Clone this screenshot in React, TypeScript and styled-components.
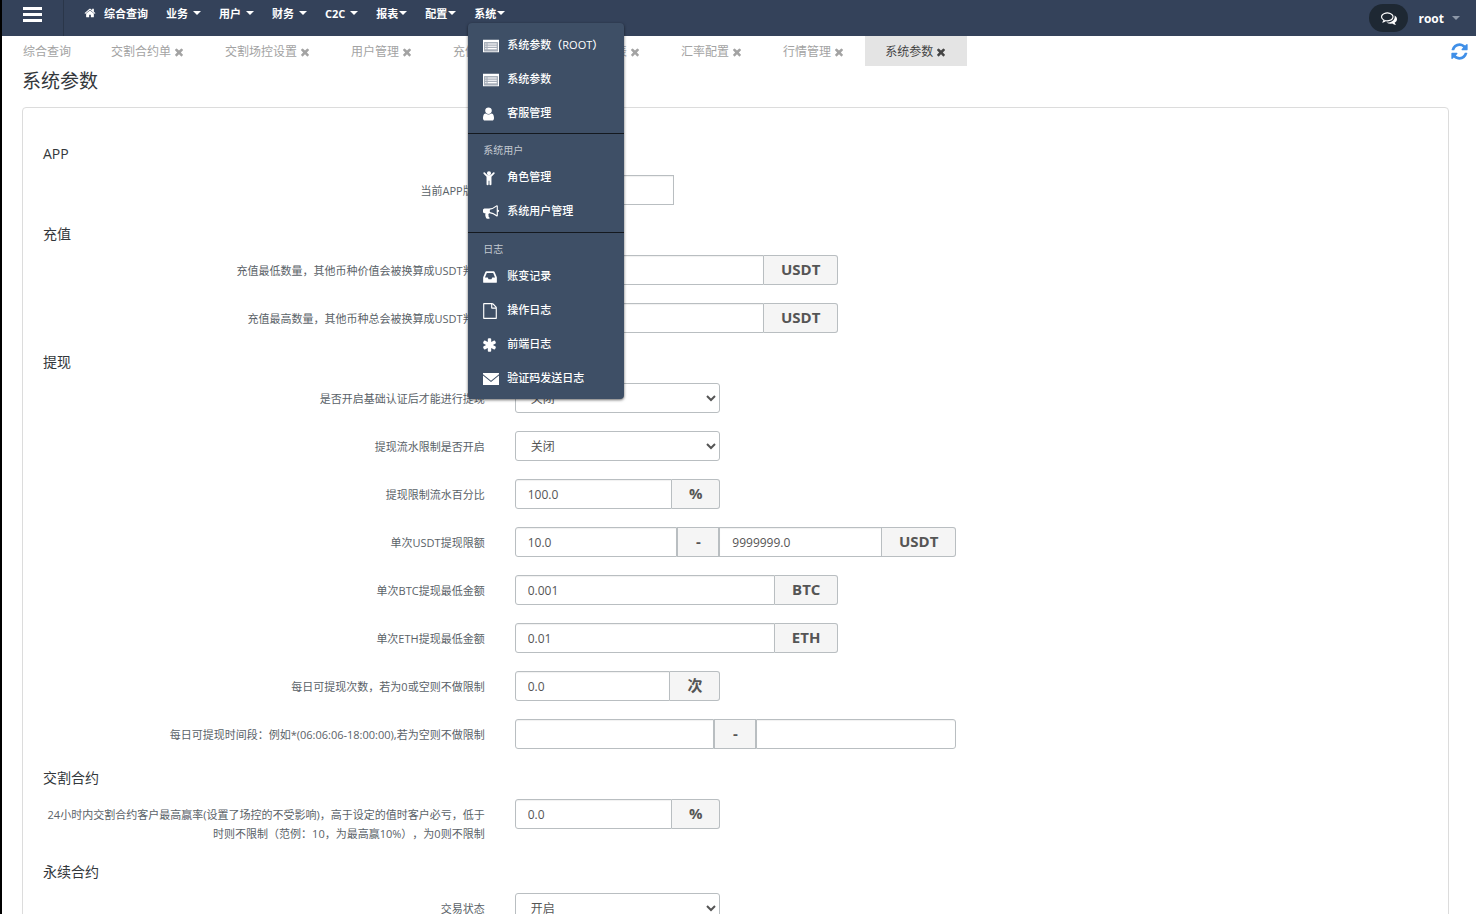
import React, { useId } from "react";
import styled, { createGlobalStyle, css } from "styled-components";

const GlobalStyle = createGlobalStyle`
  *, *::before, *::after { box-sizing: border-box; }
  body {
    margin: 0;
    background: #fff;
    color: #5a5f63;
    font-family: "Open Sans", "Noto Sans CJK SC", sans-serif;
    font-size: 11px;
    text-spacing-trim: space-all;
  }
  button, input, select { font-family: inherit; }
  ul { list-style: none; margin: 0; padding: 0; }
  a { color: inherit; text-decoration: none; }
`;

/* ---------- icons ---------- */

const ICONS = {
  home: "M1472 992v480q0 26-19 45t-45 19h-384v-384h-256v384h-384q-26 0-45-19t-19-45v-480q0-1 .5-3t.5-3l575-474 575 474q1 2 1 6zm223-69l-62 74q-8 9-21 11h-3q-13 0-21-7l-692-577-692 577q-12 8-24 7-13-2-21-11l-62-74q-8-10-7-23.5t11-21.5l719-599q32-26 76-26t76 26l244 204v-195q0-14 9-23t23-9h192q14 0 23 9t9 23v408l219 182q10 8 11 21.5t-7 23.5z",
  times:
    "M1490 1322q0 40-28 68l-136 136q-28 28-68 28t-68-28l-294-294-294 294q-28 28-68 28t-68-28l-136-136q-28-28-28-68t28-68l294-294-294-294q-28-28-28-68t28-68l136-136q28-28 68-28t68 28l294 294 294-294q28-28 68-28t68 28l136 136q28 28 28 68t-28 68l-294 294 294 294q28 28 28 68z",
  refresh:
    "M1639 1056q0 5-1 7-64 268-268 434.5t-478 166.5q-146 0-282.5-55t-243.5-157l-129 129q-19 19-45 19t-45-19-19-45v-448q0-26 19-45t45-19h448q26 0 45 19t19 45-19 45l-137 137q71 66 161 102t187 36q134 0 250-65t186-179q11-17 53-117 8-23 30-23h192q13 0 22.5 9.5t9.5 22.5zm25-800v448q0 26-19 45t-45 19h-448q-26 0-45-19t-19-45 19-45l138-138q-148-137-349-137-134 0-250 65t-186 179q-11 17-53 117-8 23-30 23h-199q-13 0-22.5-9.5t-9.5-22.5v-7q65-268 270-434.5t480-166.5q146 0 284 55.5t245 156.5l130-129q19-19 45-19t45 19 19 45z",
  comments:
    "M704 384q-153 0-286 52t-211.5 141-78.5 191q0 82 53 158t149 132l97 56-35 84q34-20 62-39l44-31 53 10q78 14 153 14 153 0 286-52t211.5-141 78.5-191-78.5-191-211.5-141-286-52zm0-128q191 0 353.5 68.5t256.5 186.5 94 257-94 257-256.5 186.5-353.5 68.5q-86 0-176-16-124 88-278 128-36 9-86 16h-3q-11 0-20.5-8t-11.5-21q-1-3-1-6.5t.5-6.5 2-6l2.5-5 3.5-5.5 4-5 4.5-5 4-4.5q5-6 23-25t26-29.5 22.5-29 25-38.5 20.5-44q-124-72-195-177t-71-224q0-139 94-257t256.5-186.5 353.5-68.5zm822 1169q10 24 20.5 44t25 38.5 22.5 29 26 29.5 23 25q1 1 4 4.5t4.5 5 4 5 3.5 5.5l2.5 5 2 6 .5 6.5-1 6.5q-3 14-13 22t-22 7q-50-7-86-16-154-40-278-128-90 16-176 16-271 0-472-132 58 4 88 4 161 0 309-45t264-129q125-92 192-212t67-254q0-77-23-152 129 71 204 178t75 230q0 120-71 224.5t-195 176.5z",
  user: "M1536 1399q0 109-62.5 187t-150.5 78h-854q-88 0-150.5-78t-62.5-187q0-85 8.5-160.5t31.5-152 58.5-131 94-89 134.5-34.5q131 128 313 128t313-128q76 0 134.5 34.5t94 89 58.5 131 31.5 152 8.5 160.5zm-256-887q0 159-112.5 271.5t-271.5 112.5-271.5-112.5-112.5-271.5 112.5-271.5 271.5-112.5 271.5 112.5 112.5 271.5z",
  bullhorn:
    "M1664 640q53 0 90.5 37.5t37.5 90.5-37.5 90.5-90.5 37.5v384q0 52-38 90t-90 38q-417-347-812-380-58 19-91 66t-31 100.5 40 92.5q-20 33-23 65.5t6 58 33.5 55 48 50 61.5 50.5q-29 58-111.5 83t-168.5 11.5-132-55.5q-7-23-29.5-87.5t-32-94.5-23-89-15-101 3.5-98.5 22-110.5h-122q-66 0-113-47t-47-113v-192q0-66 47-113t113-47h480q435 0 896-384 52 0 90 38t38 90v384zm-128 604v-954q-394 302-768 343v270q377 42 768 341z",
  inbox:
    "M1151 960h316q-1-3-2.5-8.5t-2.5-7.5l-212-496h-708l-212 496q-1 3-2.5 8.5t-2.5 7.5h316l95 192h320zm513 30v482q0 26-19 45t-45 19h-1408q-26 0-45-19t-19-45v-482q0-62 25-123l238-552q10-25 36.5-42t52.5-17h832q26 0 52.5 17t36.5 42l238 552q25 61 25 123z",
  file: "M1596 380q28 28 48 76t20 88v1152q0 40-28 68t-68 28h-1344q-40 0-68-28t-28-68v-1600q0-40 28-68t68-28h896q40 0 88 20t76 48zm-444-244v376h376q-10-29-22-41l-313-313q-12-12-41-22zm384 1528v-1024h-416q-40 0-68-28t-28-68v-416h-768v1536h1280z",
  asterisk:
    "M1546 1050q46 26 59.5 77.5t-12.5 97.5l-64 110q-26 46-77.5 59.5t-97.5-12.5l-266-153v307q0 52-38 90t-90 38h-128q-52 0-90-38t-38-90v-307l-266 153q-46 26-97.5 12.5t-77.5-59.5l-64-110q-26-46-12.5-97.5t59.5-77.5l266-154-266-154q-46-26-59.5-77.5t12.5-97.5l64-110q26-46 77.5-59.5t97.5 12.5l266 153v-307q0-52 38-90t90-38h128q52 0 90 38t38 90v307l266-153q46-26 97.5-12.5t77.5 59.5l64 110q26 46 12.5 97.5t-59.5 77.5l-266 154z",
  child:
    "M896 130a230 230 0 1 1 0 460a230 230 0 1 1 0-460zM290 270q70-60 140 0l250 250q90 60 216 60t216-60l250-250q70-60 140 0t0 150l-330 330v850q0 120-115 120t-115-120v-400h-92v400q0 120-115 120t-115-120v-850l-330-330q-60-80 0-150z",
  list: "M0 192h1792v1408H0zM128 480v992h1536V480zM256 608h128v128H256zM512 608h1024v128H512zM256 864h128v128H256zM512 864h1024v128H512zM256 1120h128v128H256zM512 1120h1024v128H512z",
  envelope: "M0 230h1792v130L896 1090 0 360zM0 500l896 730 896-730v1060H0z",
};

type IconName = keyof typeof ICONS;

/* Left edge and width of the glyphs that are narrower than the 1792 grid. */
const GLYPH_BOX: Partial<Record<IconName, [number, number]>> = {
  user: [256, 1280],
  child: [240, 1312],
  inbox: [128, 1536],
  file: [128, 1536],
  asterisk: [160, 1472],
};

const Svg = styled.svg<{ $width: number; $height: number }>`
  display: block;
  flex: none;
  width: ${(p) => p.$width}px;
  height: ${(p) => p.$height}px;
  fill: currentColor;
`;

function Icon({ name, size }: { name: IconName; size: number }) {
  const [left, width] = GLYPH_BOX[name] ?? [0, 1792];
  return (
    <Svg
      $width={Math.round((size * width) / 1792)}
      $height={size}
      viewBox={`${left} 0 ${width} 1792`}
      aria-hidden="true"
    >
      {name === "list" && <path d="M128 480h1536v992H128z" opacity="0.55" />}
      <path d={ICONS[name]} fillRule={name === "list" ? "evenodd" : "nonzero"} />
    </Svg>
  );
}

/* ---------- shell ---------- */

const Shell = styled.div`
  display: flex;
  flex-direction: column;
  height: 100vh;
  border-left: 2px solid #000;
`;

const TopBar = styled.header`
  display: flex;
  flex: none;
  height: 36px;
  background: #34425a;
  color: #fff;
`;

const MenuToggle = styled.button`
  display: flex;
  flex-direction: column;
  align-items: center;
  gap: 3px;
  width: 62px;
  padding: 7px 0 0;
  border: 0;
  border-right: 1px solid #2a3649;
  background: none;
`;

const ToggleBar = styled.span`
  width: 19px;
  height: 3px;
  background: #fff;
`;

const NavList = styled.ul`
  display: flex;
  flex: 1;
  gap: 18px;
  padding-left: 20px;
`;

const NavItem = styled.li`
  position: relative;
`;

const NavLink = styled.a<{ $tight?: boolean }>`
  display: flex;
  align-items: center;
  gap: ${(p) => (p.$tight ? 1 : 5)}px;
  height: 26px;
  font-weight: 700;
  white-space: nowrap;
`;

const HomeLink = styled(NavLink)`
  gap: 8px;
`;

const Caret = styled.span<{ $muted?: boolean }>`
  border: 4px solid transparent;
  border-top-color: ${(p) => (p.$muted ? "#8d98a8" : "#fff")};
  border-bottom: 0;
`;

const UserArea = styled.div`
  display: flex;
  align-items: center;
  gap: 10px;
  padding-right: 16px;
`;

const ChatButton = styled.button`
  display: grid;
  place-items: center;
  width: 39px;
  height: 28px;
  padding: 0;
  border: 0;
  border-radius: 14px;
  background: #1e2833;
  color: #fff;
`;

const UserButton = styled.button`
  display: flex;
  align-items: center;
  gap: 8px;
  padding: 0;
  border: 0;
  background: none;
  color: #fff;
  font-size: 12px;
  font-weight: 700;
`;

/* ---------- drop-down menu ---------- */

const Menu = styled.div`
  position: absolute;
  z-index: 10;
  top: 23px;
  left: -6px;
  width: 156px;
  border-radius: 4px;
  background: #3e4f66;
  box-shadow: 0 1px 3px rgba(0, 0, 0, 0.6);
  color: #fff;
`;

const MenuGroup = styled.section`
  padding: 4px 0;

  & + & {
    padding: 0 0 5px;
    border-top: 1px solid #14191f;
  }
`;

const MenuHeading = styled.h6`
  height: 25px;
  margin: 0;
  padding: 8px 15px 0;
  color: #c3c9d1;
  font-size: 10px;
  font-weight: 400;
  line-height: 17px;
`;

const MenuLink = styled.a`
  display: flex;
  align-items: center;
  height: 34px;
  padding: 0 15px;
  font-weight: 500;
  white-space: nowrap;
`;

const MenuIcon = styled.span`
  width: 24px;
  padding-top: 3px;
`;

/* ---------- tabs ---------- */

const TabBar = styled.nav`
  display: flex;
  flex: none;
  align-items: center;
  height: 30px;
  padding: 0 7px 0 1px;
`;

const Tab = styled.div<{ $active?: boolean }>`
  display: flex;
  align-items: center;
  gap: 2px;
  height: 30px;
  padding: 0 20px;
  background: ${(p) => (p.$active ? "#e4e4e4" : "none")};
  color: ${(p) => (p.$active ? "#444" : "#a3a3a3")};
  font-size: 12px;
  white-space: nowrap;
`;

const CloseTab = styled.button`
  padding: 1px 0 0;
  border: 0;
  background: none;
  color: inherit;
`;

const RefreshButton = styled.button`
  margin-left: auto;
  padding: 0;
  border: 0;
  background: none;
  color: #3f8fe8;
`;

/* ---------- form ---------- */

const Main = styled.main`
  flex: 1;
  min-height: 0;
  overflow-y: auto;
  scrollbar-width: none;
  padding: 0 27px 20px 20px;
`;

const PageTitle = styled.h1`
  margin: 0 0 11px;
  color: #33373b;
  font-size: 19px;
  font-weight: 400;
  line-height: 30px;
`;

const Card = styled.form`
  padding: 35px 20px 20px;
  border: 1px solid #dcdcdc;
  border-radius: 4px;
`;

const SectionTitle = styled.h2`
  margin: 0 0 10px;
  color: #33373b;
  font-size: 14px;
  font-weight: 400;
  line-height: 22px;
`;

const Row = styled.div`
  display: flex;
  align-items: flex-start;
  margin: 0 -15px 18px;
`;

const RowLabel = styled.label`
  width: calc(100% / 3);
  padding: 6px 15px 0;
  color: #5a6268;
  line-height: 19px;
  text-align: right;
`;

const columns = {
  app: "189px",
  small: "calc(100% / 6)",
  medium: "25%",
  large: "calc(100% / 3)",
};

const Column = styled.div<{ $span: keyof typeof columns }>`
  width: ${(p) => columns[p.$span]};
  padding: 0 15px;
`;

const control = css`
  height: 30px;
  border: 1px solid #b9bec1;
  background: #fff;
  color: #555;
  font-size: 12px;
`;

const Group = styled.div`
  display: flex;

  & > :first-child {
    border-radius: 3px 0 0 3px;
  }
  & > :last-child {
    border-radius: 0 3px 3px 0;
  }
`;

const TextInput = styled.input`
  ${control}
  flex: 1;
  width: 100%;
  min-width: 0;
  padding: 0 12px;
  box-shadow: inset 0 1px 1px rgba(0, 0, 0, 0.06);
`;

const Select = styled.select`
  ${control}
  width: 100%;
  padding: 0 0 0 11px;
  border-radius: 3px;
`;

const Addon = styled.span<{ $between?: boolean }>`
  min-width: 42px;
  height: 30px;
  padding: 0 17px;
  border: 1px solid #b9bec1;
  border-width: ${(p) => (p.$between ? "1px" : "1px 1px 1px 0")};
  background: #f5f5f5;
  color: #555;
  font-size: 15px;
  font-weight: 700;
  line-height: 27px;
  text-align: center;
`;

/* ---------- data ---------- */

const NAV = [
  { label: "业务" },
  { label: "用户" },
  { label: "财务" },
  { label: "C2C" },
  { label: "报表", tight: true },
  { label: "配置", tight: true },
];

const MENU: { heading?: string; items: [IconName, string][] }[] = [
  {
    items: [
      ["list", "系统参数（ROOT）"],
      ["list", "系统参数"],
      ["user", "客服管理"],
    ],
  },
  {
    heading: "系统用户",
    items: [
      ["child", "角色管理"],
      ["bullhorn", "系统用户管理"],
    ],
  },
  {
    heading: "日志",
    items: [
      ["inbox", "账变记录"],
      ["file", "操作日志"],
      ["asterisk", "前端日志"],
      ["envelope", "验证码发送日志"],
    ],
  },
];

const TABS = ["交割合约单", "交割场控设置", "用户管理", "充值订单", "用户财务报表", "汇率配置", "行情管理", "系统参数"];

type Field = {
  label: string;
  span: keyof typeof columns;
  kind?: "select" | "range";
  value?: string;
  to?: string;
  unit?: string;
};

const SECTIONS: { title: string; fields: Field[] }[] = [
  { title: "APP", fields: [{ label: "当前APP版本", span: "app", value: "" }] },
  {
    title: "充值",
    fields: [
      { label: "充值最低数量，其他币种价值会被换算成USDT判断", span: "medium", value: "", unit: "USDT" },
      { label: "充值最高数量，其他币种总会被换算成USDT判断", span: "medium", value: "", unit: "USDT" },
    ],
  },
  {
    title: "提现",
    fields: [
      { label: "是否开启基础认证后才能进行提现", span: "small", kind: "select", value: "关闭" },
      { label: "提现流水限制是否开启", span: "small", kind: "select", value: "关闭" },
      { label: "提现限制流水百分比", span: "small", value: "100.0", unit: "%" },
      { label: "单次USDT提现限额", span: "large", kind: "range", value: "10.0", to: "9999999.0", unit: "USDT" },
      { label: "单次BTC提现最低金额", span: "medium", value: "0.001", unit: "BTC" },
      { label: "单次ETH提现最低金额", span: "medium", value: "0.01", unit: "ETH" },
      { label: "每日可提现次数，若为0或空则不做限制", span: "small", value: "0.0", unit: "次" },
      { label: "每日可提现时间段：例如*(06:06:06-18:00:00),若为空则不做限制", span: "large", kind: "range", value: "", to: "" },
    ],
  },
  {
    title: "交割合约",
    fields: [
      {
        label:
          "24小时内交割合约客户最高赢率(设置了场控的不受影响)，高于设定的值时客户必亏，低于时则不限制（范例：10，为最高赢10%），为0则不限制",
        span: "small",
        value: "0.0",
        unit: "%",
      },
    ],
  },
  { title: "永续合约", fields: [{ label: "交易状态", span: "small", kind: "select", value: "开启" }] },
];

function FieldRow({ field }: { field: Field }) {
  const id = useId();
  return (
    <Row>
      <RowLabel htmlFor={id}>{field.label}</RowLabel>
      <Column $span={field.span}>
        {field.kind === "select" ? (
          <Select id={id} defaultValue={field.value}>
            <option>开启</option>
            <option>关闭</option>
          </Select>
        ) : field.unit || field.kind === "range" ? (
          <Group>
            <TextInput id={id} defaultValue={field.value} />
            {field.kind === "range" && (
              <>
                <Addon $between>-</Addon>
                <TextInput aria-label={field.label} defaultValue={field.to} />
              </>
            )}
            {field.unit && <Addon>{field.unit}</Addon>}
          </Group>
        ) : (
          <TextInput id={id} defaultValue={field.value} />
        )}
      </Column>
    </Row>
  );
}

export default function App() {
  return (
    <Shell>
      <GlobalStyle />
      <TopBar>
        <MenuToggle type="button" aria-label="菜单">
          <ToggleBar />
          <ToggleBar />
          <ToggleBar />
        </MenuToggle>
        <NavList>
          <NavItem>
            <HomeLink href="#">
              <Icon name="home" size={12} />
              综合查询
            </HomeLink>
          </NavItem>
          {NAV.map((item) => (
            <NavItem key={item.label}>
              <NavLink href="#" $tight={item.tight}>
                {item.label}
                <Caret />
              </NavLink>
            </NavItem>
          ))}
          <NavItem>
            <NavLink href="#" $tight>
              系统
              <Caret />
            </NavLink>
            <Menu>
              {MENU.map((group, i) => (
                <MenuGroup key={i}>
                  {group.heading && <MenuHeading>{group.heading}</MenuHeading>}
                  <ul>
                    {group.items.map(([icon, text]) => (
                      <li key={text}>
                        <MenuLink href="#">
                          <MenuIcon>
                            <Icon name={icon} size={16} />
                          </MenuIcon>
                          {text}
                        </MenuLink>
                      </li>
                    ))}
                  </ul>
                </MenuGroup>
              ))}
            </Menu>
          </NavItem>
        </NavList>
        <UserArea>
          <ChatButton type="button" aria-label="消息">
            <Icon name="comments" size={16} />
          </ChatButton>
          <UserButton type="button">
            root
            <Caret $muted />
          </UserButton>
        </UserArea>
      </TopBar>
      <TabBar>
        <Tab>综合查询</Tab>
        {TABS.map((label, i) => (
          <Tab key={label} $active={i === TABS.length - 1}>
            {label}
            <CloseTab type="button" aria-label="关闭">
              <Icon name="times" size={12} />
            </CloseTab>
          </Tab>
        ))}
        <RefreshButton type="button" aria-label="刷新">
          <Icon name="refresh" size={19} />
        </RefreshButton>
      </TabBar>
      <Main>
        <PageTitle>系统参数</PageTitle>
        <Card>
          {SECTIONS.map((section) => (
            <React.Fragment key={section.title}>
              <SectionTitle>{section.title}</SectionTitle>
              {section.fields.map((field) => (
                <FieldRow key={field.label} field={field} />
              ))}
            </React.Fragment>
          ))}
        </Card>
      </Main>
    </Shell>
  );
}
